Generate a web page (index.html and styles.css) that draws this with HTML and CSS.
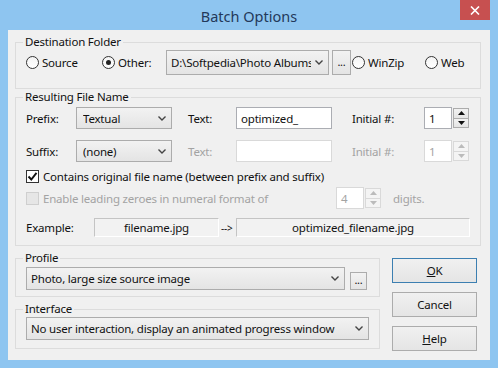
FILE: index.html
```html
<!DOCTYPE html>
<html lang="en">
<head>
    <meta charset="UTF-8">
    <title>Batch Options</title>
    <link rel="stylesheet" href="styles.css">
</head>
<body>
<div class="window">
    <div class="titlebar">
        <span class="title">Batch Options</span>
        <span class="close">
            <svg width="10" height="9" viewBox="0 0 10 9"><path d="M1 0.5 L9 8.5 M9 0.5 L1 8.5" stroke="#fff" stroke-width="1.6"/></svg>
        </span>
    </div>

    <div class="client">
        <!-- destination -->
        <fieldset class="group dest">
            <legend>Destination Folder</legend>
            <div class="row">
                <label class="opt w-source"><span class="radio"></span>Source</label>
                <label class="opt w-other"><span class="radio on"></span>Other:</label>
                <div class="combo w-path">
                    <span class="val">D:\Softpedia\Photo Albums</span>
                    <svg class="chev" width="8" height="5" viewBox="0 0 8 5"><path d="M0.5 0.5 L4 4 L7.5 0.5" fill="none" stroke="#444" stroke-width="1.4"/></svg>
                </div>
                <span class="btn dots dots-dest">...</span>
                <label class="opt w-winzip"><span class="radio"></span>WinZip</label>
                <label class="opt"><span class="radio"></span>Web</label>
            </div>
        </fieldset>

        <!-- file name -->
        <fieldset class="group naming">
            <legend>Resulting File Name</legend>
            <div class="row r-prefix">
                <span class="lbl c-label">Prefix:</span>
                <div class="combo c-combo">
                    <span class="val">Textual</span>
                    <svg class="chev" width="8" height="5" viewBox="0 0 8 5"><path d="M0.5 0.5 L4 4 L7.5 0.5" fill="none" stroke="#444" stroke-width="1.4"/></svg>
                </div>
                <span class="lbl c-text">Text:</span>
                <span class="input c-input">optimized_</span>
                <span class="lbl c-init">Initial #:</span>
                <span class="input c-num">1</span>
                <span class="spin">
                    <span class="arrow"><svg width="7" height="4" viewBox="0 0 7 4"><path d="M0 4 L3.5 0 L7 4 Z" fill="#111"/></svg></span>
                    <span class="arrow"><svg width="7" height="4" viewBox="0 0 7 4"><path d="M0 0 L3.5 4 L7 0 Z" fill="#111"/></svg></span>
                </span>
            </div>
            <div class="row r-suffix">
                <span class="lbl c-label">Suffix:</span>
                <div class="combo c-combo">
                    <span class="val">(none)</span>
                    <svg class="chev" width="8" height="5" viewBox="0 0 8 5"><path d="M0.5 0.5 L4 4 L7.5 0.5" fill="none" stroke="#444" stroke-width="1.4"/></svg>
                </div>
                <span class="lbl c-text off">Text:</span>
                <span class="input c-input off"></span>
                <span class="lbl c-init off">Initial #:</span>
                <span class="input c-num off">1</span>
                <span class="spin off">
                    <span class="arrow"><svg width="7" height="4" viewBox="0 0 7 4"><path d="M0 4 L3.5 0 L7 4 Z" fill="#bbb"/></svg></span>
                    <span class="arrow"><svg width="7" height="4" viewBox="0 0 7 4"><path d="M0 0 L3.5 4 L7 0 Z" fill="#bbb"/></svg></span>
                </span>
            </div>
            <div class="row r-check">
                <span class="check">
                    <svg width="11" height="11" viewBox="0 0 11 11"><path d="M1.5 5.5 L4.3 8.5 L9.5 1.8" fill="none" stroke="#111" stroke-width="1.9"/></svg>
                </span>
                <span>Contains original file name (between prefix and suffix)</span>
            </div>
            <div class="row r-zeroes">
                <span class="check off"></span>
                <span class="off c-zeroes">Enable leading zeroes in numeral format of</span>
                <span class="input c-num off">4</span>
                <span class="spin off">
                    <span class="arrow"><svg width="7" height="4" viewBox="0 0 7 4"><path d="M0 4 L3.5 0 L7 4 Z" fill="#bbb"/></svg></span>
                    <span class="arrow"><svg width="7" height="4" viewBox="0 0 7 4"><path d="M0 0 L3.5 4 L7 0 Z" fill="#bbb"/></svg></span>
                </span>
                <span class="off c-digits">digits.</span>
            </div>
            <div class="row r-example">
                <span class="lbl c-example">Example:</span>
                <span class="static s-from">filename.jpg</span>
                <span class="to">--&gt;</span>
                <span class="static s-to">optimized_filename.jpg</span>
            </div>
        </fieldset>

        <div class="lower">
            <div class="left">
                <fieldset class="group profile">
                    <legend>Profile</legend>
                    <div class="row">
                        <div class="combo p-combo">
                            <span class="val">Photo, large size source image</span>
                            <svg class="chev" width="8" height="5" viewBox="0 0 8 5"><path d="M0.5 0.5 L4 4 L7.5 0.5" fill="none" stroke="#444" stroke-width="1.4"/></svg>
                        </div>
                        <span class="btn dots dots-profile">...</span>
                    </div>
                </fieldset>
                <fieldset class="group iface">
                    <legend>Interface</legend>
                    <div class="row">
                        <div class="combo i-combo">
                            <span class="val">No user interaction, display an animated progress window</span>
                            <svg class="chev" width="8" height="5" viewBox="0 0 8 5"><path d="M0.5 0.5 L4 4 L7.5 0.5" fill="none" stroke="#444" stroke-width="1.4"/></svg>
                        </div>
                    </div>
                </fieldset>
            </div>
            <div class="buttons">
                <span class="btn push default"><u>O</u>K</span>
                <span class="btn push">Cancel</span>
                <span class="btn push"><u>H</u>elp</span>
            </div>
        </div>
    </div>
</div>
</body>
</html>
```

FILE: styles.css
```css
* {
    box-sizing: border-box;
}

body {
    margin: 0;
    font-family: "Segoe UI", "Noto Sans", "Open Sans", sans-serif;
    font-size: 11.5px;
    letter-spacing: -0.2px;
    color: #111;
}

.window {
    width: 498px;
    height: 368px;
    background: #8ec5f0;
    padding: 0 8px 8px 8px;
    display: flex;
    flex-direction: column;
}

.titlebar {
    height: 30px;
    display: flex;
    align-items: flex-start;
    justify-content: center;
    position: relative;
}

.title {
    margin-top: 6px;
    font-size: 14.5px;
    letter-spacing: 0;
    color: #23395a;
}

.close {
    position: absolute;
    right: 0;
    top: 0;
    width: 30px;
    height: 20px;
    background: #c75050;
    display: flex;
    align-items: center;
    justify-content: center;
}

.client {
    flex: 1;
    background: #f0f0f0;
    padding: 4px 9px 0 7px;
}

/* group boxes */
.group {
    margin: 0;
    border: 1px solid #dcdcdc;
    padding: 0 10px;
    min-width: 0;
}

.group legend {
    padding: 0 2px;
    margin-left: -3px;
    line-height: 16px;
}

.row {
    display: flex;
    align-items: center;
}

.dest {
    padding-bottom: 13px;
}

.dest .row {
    height: 25px;
}

.opt {
    display: flex;
    align-items: center;
}

.w-source { width: 76px; }
.w-other { width: 64px; }
.w-winzip { width: 73px; }

.radio {
    width: 13px;
    height: 13px;
    border-radius: 50%;
    border: 1px solid #333;
    background: linear-gradient(#f4f4f4, #fff);
    margin-right: 3px;
    display: flex;
    align-items: center;
    justify-content: center;
}

.radio.on::after {
    content: "";
    width: 5px;
    height: 5px;
    border-radius: 50%;
    background: #222;
}

.combo {
    height: 100%;
    border: 1px solid #acacac;
    background: linear-gradient(#f2f2f2, #e4e4e4);
    display: flex;
    align-items: center;
    padding: 0 5px 0 4px;
}

.combo .val {
    flex: 1;
    overflow: hidden;
    white-space: nowrap;
}

.combo .chev {
    margin-left: 4px;
    flex: none;
}

.w-path {
    width: 163px;
    margin-right: 3px;
}

.btn {
    border: 1px solid #acacac;
    background: linear-gradient(#f2f2f2, #e4e4e4);
    display: flex;
    align-items: center;
    justify-content: center;
}

.dots {
    font-size: 11px;
    line-height: 1;
    padding-bottom: 3px;
}

.dots-dest {
    width: 19px;
    height: 25px;
    margin-right: 1px;
}

/* naming group */
.naming {
    padding-bottom: 8px;
}

.naming .row {
    margin-top: 11px;
}

.r-prefix,
.r-suffix {
    height: 22px;
}

.naming .r-prefix {
    margin-top: 2px;
}

.c-label { width: 50px; }
.c-combo { width: 96px; padding-left: 6px; }
.c-text { width: 64px; padding-left: 16px; }
.c-input { width: 96px; }
.c-init { width: 92px; padding-left: 20px; }
.c-num { width: 28px; }

.input {
    height: 100%;
    background: #fff;
    border: 1px solid #abadb3;
    padding: 0 4px;
    display: flex;
    align-items: center;
}

.input.off {
    border-color: #d9d9d9;
}

.off {
    color: #a3a3a3;
}

.spin {
    width: 16px;
    height: 20px;
    margin-left: 1px;
    display: flex;
    flex-direction: column;
}

.spin .arrow {
    flex: 1;
    border: 1px solid #acacac;
    background: linear-gradient(#f2f2f2, #e4e4e4);
    display: flex;
    align-items: center;
    justify-content: center;
}

.spin .arrow + .arrow {
    border-top: none;
}

.spin.off .arrow {
    border-color: #d9d9d9;
    background: #f4f4f4;
}

.naming .r-check {
    margin-top: 6px;
    height: 16px;
}

.check {
    width: 13px;
    height: 13px;
    border: 1px solid #333;
    background: #fff;
    margin-right: 4px;
    display: flex;
    align-items: center;
    justify-content: center;
}

.check.off {
    border-color: #cfcfcf;
    background: #e6e6e6;
}

.naming .r-zeroes {
    margin-top: 3px;
    height: 22px;
}

.c-zeroes { width: 293px; }
.c-digits { margin-left: 12px; }

.naming .r-example {
    margin-top: 9px;
    height: 19px;
}

.c-example { width: 68px; }

.static {
    height: 100%;
    border: 1px solid #c4c4c4;
    border-right-color: #fff;
    border-bottom-color: #fff;
    background: #f2f2f2;
    display: flex;
    align-items: center;
    justify-content: center;
}

.s-from { width: 125px; }
.s-to { width: 234px; }

.to {
    width: 17px;
    font-size: 10px;
    padding-left: 2px;
}

/* lower part */
.lower {
    display: flex;
    gap: 12px;
    margin-top: 4px;
}

.left {
    width: 365px;
    display: flex;
    flex-direction: column;
    gap: 4px;
}

.profile {
    padding-top: 1px;
    padding-bottom: 6px;
}

.profile .row {
    height: 23px;
    align-items: flex-end;
}

.p-combo {
    width: 319px;
    margin-right: 5px;
}

.dots-profile {
    width: 17px;
    height: 18px;
}

.iface {
    padding-bottom: 8px;
}

.iface .row {
    height: 23px;
}

.i-combo {
    width: 343px;
}

.buttons {
    width: 85px;
    margin-top: 8px;
    display: flex;
    flex-direction: column;
    gap: 9px;
}

.push {
    height: 25px;
    background: linear-gradient(#f0f0f0, #e5e5e5);
}

.push.default {
    border-color: #3c7fb1;
}
```
